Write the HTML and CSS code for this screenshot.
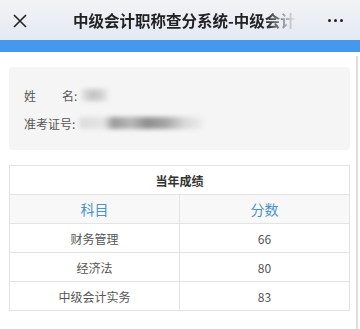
FILE: index.html
```html
<!DOCTYPE html>
<html lang="zh">
<head>
    <meta charset="UTF-8">
    <meta name="viewport" content="width=device-width, initial-scale=1.0">
    <title>中级会计职称查分系统</title>
    <link rel="stylesheet" href="styles.css">
</head>
<body>

    <div class="topbar">
        <span class="close">
            <svg width="14" height="14" viewBox="0 0 14 14"><path d="M1 1L13 13M13 1L1 13" stroke="#222" stroke-width="1.6" fill="none"/></svg>
        </span>
        <div class="title">中级会计职称查分系统-中级会计</div>
        <span class="more"><i></i><i></i><i></i></span>
    </div>
    <div class="bluebar"></div>

    <div class="page">
        <div class="info">
            <div class="row">
                <span class="label">姓<em></em>名:</span>
                <span class="blur short"></span>
            </div>
            <div class="row">
                <span class="label">准考证号:</span>
                <span class="blur long"></span>
            </div>
        </div>

        <table class="scores">
            <tr><th colspan="2">当年成绩</th></tr>
            <tr class="head"><td>科目</td><td>分数</td></tr>
            <tr><td>财务管理</td><td>66</td></tr>
            <tr><td>经济法</td><td>80</td></tr>
            <tr><td>中级会计实务</td><td>83</td></tr>
        </table>
    </div>

    <div class="scroll"></div>

</body>
</html>
```

FILE: styles.css
```css
body {
    margin: 0;
    font-family: "Noto Sans CJK SC", "Liberation Sans", sans-serif;
    background: #fff;
    color: #555;
    width: 360px;
    height: 329px;
    overflow: hidden;
}

.topbar {
    height: 40px;
    display: flex;
    align-items: center;
    background: linear-gradient(#f2f3f6, #e3eaf3);
}

.close {
    width: 40px;
    display: flex;
    justify-content: center;
    padding-top: 1px;
}

.title {
    flex: 1;
    font-size: 15.5px;
    font-weight: bold;
    color: #222;
    white-space: nowrap;
    overflow: hidden;
    padding-left: 33px;
    -webkit-mask-image: linear-gradient(to right, #000 88%, transparent 100%);
    mask-image: linear-gradient(to right, #000 88%, transparent 100%);
}

.more {
    width: 50px;
    display: flex;
    justify-content: center;
    gap: 3px;
    padding-left: 14px;
}

.more i {
    width: 3px;
    height: 3px;
    border-radius: 50%;
    background: #222;
}

.bluebar {
    height: 12px;
    background: #4598ec;
}

.page {
    padding: 15px 10px 0 9px;
}

.info {
    background: #f5f5f5;
    border-radius: 4px;
    padding: 14px 15px 13px;
    font-size: 12px;
    color: #555;
}

.row {
    display: flex;
    align-items: center;
    height: 28px;
}

.label em {
    display: inline-block;
    width: 26px;
}

.blur {
    height: 12px;
    margin-left: 4px;
    border-radius: 3px;
    filter: blur(2px);
}

.blur.short {
    width: 28px;
    background: linear-gradient(to right, #e6e6e6, #c4c4c4 40%, #cfcfcf 70%, #eee);
}

.blur.long {
    width: 124px;
    background: linear-gradient(to right, #ddd, #e4e4e4 20%, #9a9a9a 28%, #b8b8b8 42%, #8f8f8f 55%, #a5a5a5 70%, #d8d8d8 85%, #eee);
}

.scores {
    width: 100%;
    margin-top: 15px;
    border-collapse: collapse;
    font-size: 12px;
    text-align: center;
}

.scores th,
.scores td {
    border: 1.5px solid #e3e3e3;
    height: 28px;
    padding: 0;
    width: 50%;
}

.scores th {
    font-weight: bold;
    color: #333;
}

.scores .head td {
    background: #f8f8f8;
    color: #4b93c6;
    font-size: 14px;
}

.scroll {
    position: absolute;
    top: 56px;
    right: 2px;
    width: 2px;
    height: 273px;
    background: #ddd;
}
```
